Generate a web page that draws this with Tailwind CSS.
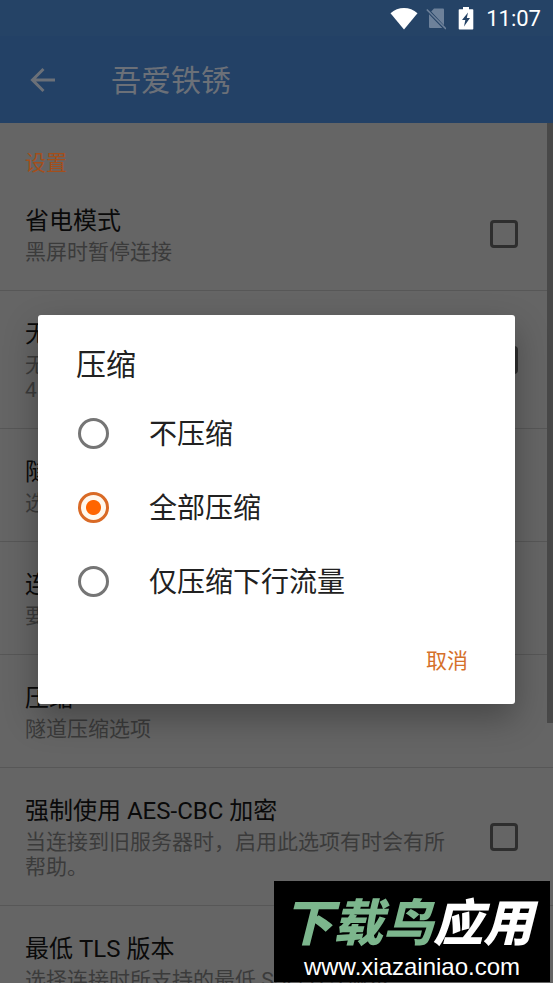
<!DOCTYPE html>
<html lang="zh-CN">
<head>
<meta charset="utf-8">
<meta name="viewport" content="width=device-width, initial-scale=1">
<title>吾爱铁锈</title>
<script src="https://cdn.jsdelivr.net/npm/@tailwindcss/browser@4"></script>
</head>
<body class="relative h-screen overflow-hidden bg-[#656565] font-[Roboto,'Noto_Sans_CJK_SC',sans-serif] text-[#0a0a0a]">
  <div class="flex h-9 items-center justify-end bg-[#254366] pt-0.5 pr-3 text-white">
    <svg class="h-6 w-7" viewBox="0 0 28 24" fill="currentColor" aria-hidden="true"><path d="M.5 6.200C8-.8 20-.8 27.500 6.200L14 22.500Z"/></svg>
    <svg class="mr-1 ml-2 h-6 w-5" viewBox="0 0 20 24" aria-hidden="true"><path fill="#6d819a" d="M8 1.500h9q1 0 1 1v15.700L5.200 4.400ZM3 7.200 16.300 21H4q-1 0-1-1Z"/><path d="M.8 2.500 20 22" stroke="#6d819a" stroke-width="1.600"/></svg>
    <svg class="ml-2 h-6 w-4" viewBox="0 0 16 24" aria-hidden="true"><path fill="currentColor" d="M5 0h6v2.300h3.500q.8 0 .8.800v18.700q0 .8-.8.800h-13q-.8 0-.8-.8V3.100q0-.8.800-.8H5Z"/><path fill="#254366" d="M10 5.500 4 13h3.300L6 19.500 12 11H8.800Z"/></svg>
    <span class="ml-3 text-[22px] leading-8">11:07</span>
  </div>
  <header class="flex h-[87px] items-center bg-[#234166] pl-7 text-[#6b7078]">
    <button type="button" aria-label="返回" class="flex h-8 w-8 items-center">
      <svg class="h-8 w-7" viewBox="0 0 28 32" fill="none" stroke="currentColor" stroke-width="3" aria-hidden="true"><path d="M27 16H5M15.500 5 4.500 16 15.500 27"/></svg>
    </button>
    <h1 class="ml-[51px] pt-0.5 text-[30px] leading-9">吾爱铁锈</h1>
  </header>

  <main>
    <h2 class="px-[25px] pt-7 pb-0.5 text-[21px] leading-[25px] text-[#a34f1c]">设置</h2>
    <label class="flex items-center justify-between border-b border-[#575757] pr-[35px] pl-[25px]">
      <span class="flex flex-col gap-1 pt-7 pb-[25px]"><span class="text-2xl leading-[30px]">省电模式</span><span class="text-[21px] leading-[25px] text-[#3b3b3b]">黑屏时暂停连接</span></span>
      <input type="checkbox" class="h-7 w-7 shrink-0 appearance-none rounded border-3 border-[#2e2e2e]">
    </label>
    <label class="flex items-center justify-between border-b border-[#575757] pr-[35px] pl-[25px]">
      <span class="flex flex-col gap-1 pt-7 pb-[25px]"><span class="text-2xl leading-[30px]">无</span><span class="text-[21px] leading-[25px] text-[#3b3b3b]">无<br>4</span></span>
      <input type="checkbox" class="h-7 w-7 shrink-0 appearance-none rounded border-3 border-[#2e2e2e]">
    </label>
    <div class="flex flex-col gap-1 border-b border-[#575757] pt-7 pb-[25px] pl-[25px]">
      <span class="text-2xl leading-[30px]">隧</span><span class="text-[21px] leading-[25px] text-[#3b3b3b]">选</span>
    </div>
    <div class="flex flex-col gap-1 border-b border-[#575757] pt-7 pb-[25px] pl-[25px]">
      <span class="text-2xl leading-[30px]">连</span><span class="text-[21px] leading-[25px] text-[#3b3b3b]">要</span>
    </div>
    <div class="flex flex-col gap-1 border-b border-[#575757] pt-7 pb-[25px] pl-[25px]">
      <span class="text-2xl leading-[30px]">压缩</span><span class="text-[21px] leading-[25px] text-[#3b3b3b]">隧道压缩选项</span>
    </div>
    <label class="flex items-center justify-between gap-8 border-b border-[#575757] pr-[35px] pl-[25px]">
      <span class="flex flex-col gap-1 pt-7 pb-[25px]"><span class="text-2xl leading-[30px]">强制使用 AES-CBC 加密</span><span class="text-[21px] leading-[25px] text-[#3b3b3b]">当连接到旧服务器时，启用此选项有时会有所帮助。</span></span>
      <input type="checkbox" class="h-7 w-7 shrink-0 appearance-none rounded border-3 border-[#2e2e2e]">
    </label>
    <div class="flex flex-col gap-1 pt-7 pb-[25px] pl-[25px]">
      <span class="text-2xl leading-[30px]">最低 TLS 版本</span><span class="text-[21px] leading-[25px] text-[#3b3b3b]">选择连接时所支持的最低 SSL/TLS 版本</span>
    </div>
  </main>
  <div class="absolute top-[123px] right-0 h-[600px] w-1.5 bg-[#484848]"></div>

  <div class="absolute inset-x-0 top-9 bottom-0 flex items-center px-[38px]">
    <section role="dialog" aria-modal="true" aria-labelledby="dialog-title" class="w-full rounded-[3px] bg-white pt-8 pb-[25px] text-[#212121] shadow-[0_14px_34px_rgba(0,0,0,0.3)]">
      <h2 id="dialog-title" class="px-[38px] text-[30px] leading-9">压缩</h2>
      <div class="mt-[13px] flex flex-col">
        <label class="flex h-[74px] items-center gap-10 px-10"><input type="radio" name="compression" class="h-[31px] w-[31px] appearance-none rounded-full border-3 border-[#757575]"><span class="pt-1 text-[28px] leading-9">不压缩</span></label>
        <label class="flex h-[74px] items-center gap-10 px-10"><input type="radio" name="compression" checked class="h-[31px] w-[31px] appearance-none rounded-full border-3 border-[#d96a26] bg-[radial-gradient(circle,#ff6500_7px,#fff8ee_8px)]"><span class="pt-1 text-[28px] leading-9">全部压缩</span></label>
        <label class="flex h-[74px] items-center gap-10 px-10"><input type="radio" name="compression" class="h-[31px] w-[31px] appearance-none rounded-full border-3 border-[#757575]"><span class="pt-1 text-[28px] leading-9">仅压缩下行流量</span></label>
      </div>
      <div class="mt-[25px] flex justify-end pr-[35px]">
        <button type="button" class="h-9 px-3 text-[21px] leading-9 text-[#d5702a]">取消</button>
      </div>
    </section>
  </div>

  <aside class="absolute right-[3px] bottom-px flex h-[101px] w-[276px] flex-col items-center bg-black pt-2 text-white">
    <span class="pr-2 font-['Noto_Sans_CJK_SC',sans-serif] text-[50px] leading-[60px] font-black whitespace-nowrap italic"><span class="text-[#7cb68d]">下载鸟</span>应用</span>
    <span class="pt-1 font-['Liberation_Sans',sans-serif] text-2xl leading-7">www.xiazainiao.com</span>
  </aside>
</body>
</html>
